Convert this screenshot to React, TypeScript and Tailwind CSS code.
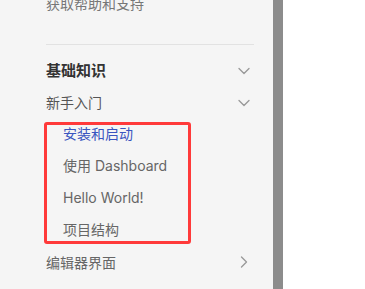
import { ChevronDown, ChevronRight } from 'lucide-react';

const font = { fontFamily: 'Inter, "Noto Sans CJK SC", sans-serif' };

const subItems = [
    { label: '安装和启动', active: true },
    { label: '使用 Dashboard', active: false },
    { label: 'Hello World!', active: false },
    { label: '项目结构', active: false }
];

export default function App() {
    return (
        <div className="flex h-[289px] w-[365px] overflow-hidden bg-white text-[14px]" style={font}>
            <div className="w-[273px] shrink-0 bg-[#f5f5f5] pl-[46px] pr-[19px]">
                <div className="-mt-[12px] h-[32px] leading-[32px] text-[#777]">获取帮助和支持</div>

                <div className="mt-[24px] h-px bg-[#e2e2e2]" />

                <div className="mt-[10px] flex h-[32px] items-center justify-between">
                    <span className="text-[15px] font-bold text-[#333]">基础知识</span>
                    <ChevronDown className="h-5 w-5 text-[#999]" strokeWidth={1.6} />
                </div>

                <div className="flex h-[31px] items-center justify-between">
                    <span className="text-[#555]">新手入门</span>
                    <ChevronDown className="h-5 w-5 text-[#999]" strokeWidth={1.6} />
                </div>

                <div className="relative">
                    <ul className="pl-[17px]">
                        {subItems.map((item) => (
                            <li
                                key={item.label}
                                className={`h-[32px] leading-[32px] ${item.active ? 'text-[#3a55c0]' : 'text-[#666]'}`}
                            >
                                {item.label}
                            </li>
                        ))}
                    </ul>
                    {/* red annotation frame */}
                    <div className="pointer-events-none absolute left-[-2px] top-[4px] h-[122px] w-[147px] rounded-[3px] border-[3px] border-[#ff3a3a]" />
                </div>

                <div className="flex h-[32px] items-center justify-between">
                    <span className="text-[#666]">编辑器界面</span>
                    <ChevronRight className="h-5 w-5 text-[#999]" strokeWidth={1.6} />
                </div>
            </div>
            <div className="w-[10px] shrink-0 bg-[#8c8c8c]" />
            <div className="flex-1 bg-white" />
        </div>
    );
}
